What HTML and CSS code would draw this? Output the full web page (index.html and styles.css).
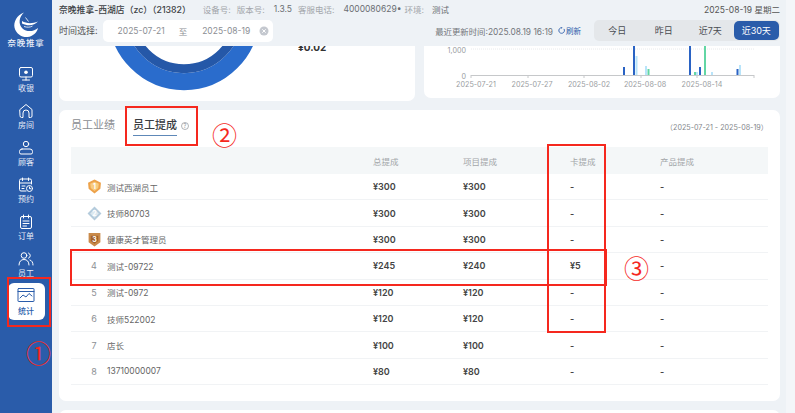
FILE: index.html
```html
<!DOCTYPE html>
<html lang="zh">
<head>
<meta charset="utf-8">
<title>员工提成</title>
<link rel="stylesheet" href="styles.css">
</head>
<body>
<div class="app">
  <aside class="side">
    <div class="brand">
      <svg class="logo" viewBox="0 0 26 26" width="26" height="26">
        <path d="M11 .5C3.500 3.500 .5 10 1.500 15.500 3 22 9 25.500 14.500 25 20 24.500 24 20.500 25 16 21 19.500 14 20.500 9.500 16.500 5 12 6 5 11 .5Z" fill="#fff"/>
        <path d="M9 9C13 11.500 19 12 25 9.500 21.500 13.500 15 14.500 9 11.500Z" fill="#fff"/>
        <path d="M12.500 5.500 15.500 9.500M11 14.500C14 15.500 17 15.500 19.500 14" stroke="#fff" stroke-width=".8" fill="none"/>
      </svg>
      <div class="brand-name">奈晚推拿</div>
    </div>
    <nav class="nav">
      <div class="nav-item">
        <svg viewBox="0 0 16 16" width="16" height="16"><rect x="1.500" y="1.500" width="13" height="9.500" rx="1.500"/><circle class="solid" cx="8" cy="6.200" r="1.800"/><path d="M8 11v3M4.500 14h7"/></svg>
        <span>收银</span>
      </div>
      <div class="nav-item">
        <svg viewBox="0 0 16 16" width="16" height="16"><path d="M2 6.500 8 1.500l6 5v6.500a1.500 1.500 0 0 1-1.500 1.500H11V10a3 3 0 0 0-6 0v4.500H3.500A1.500 1.500 0 0 1 2 13Z"/></svg>
        <span>房间</span>
      </div>
      <div class="nav-item">
        <svg viewBox="0 0 16 16" width="16" height="16"><circle cx="8" cy="4" r="2.700"/><path d="M4 9h8a2.500 2.500 0 0 1 2.500 2.500v1A1.500 1.500 0 0 1 13 14H3a1.500 1.500 0 0 1-1.500-1.500v-1A2.500 2.500 0 0 1 4 9Z"/></svg>
        <span>顾客</span>
      </div>
      <div class="nav-item">
        <svg viewBox="0 0 16 16" width="16" height="16"><path d="M8 14H3a1.500 1.500 0 0 1-1.500-1.500v-9A1.500 1.500 0 0 1 3 2h9a1.500 1.500 0 0 1 1.500 1.500V7M4.500 1v2.500M10.500 1v2.500M1.500 6h12M4 9h3M4 11.500h2"/><circle cx="11.500" cy="11.500" r="3"/><path d="M11.500 10v1.700h1.300"/></svg>
        <span>预约</span>
      </div>
      <div class="nav-item">
        <svg viewBox="0 0 16 16" width="16" height="16"><rect x="2.500" y="2.500" width="11" height="12" rx="1.500"/><path d="M5.500 1v3M10.500 1v3M5 7h6M5 9.500h6M5 12h3.500"/></svg>
        <span>订单</span>
      </div>
      <div class="nav-item">
        <svg viewBox="0 0 16 16" width="16" height="16"><circle cx="6" cy="4.500" r="2.800"/><path d="M1 14c0-3.500 2-5.500 5-5.500s5 2 5 5.500M10.500 2a2.800 2.800 0 0 1 0 5.200M12 9c2 .6 3 2.500 3 5"/></svg>
        <span>员工</span>
      </div>
      <div class="nav-item active">
        <svg viewBox="0 0 18 16" width="18" height="16"><rect x="1" y="1.500" width="16" height="13" rx=".5"/><path d="M1 4.500h16M3 11l3-3 3 2 3-3.500 3 2.500"/></svg>
        <span>统计</span>
      </div>
    </nav>
  </aside>

  <main class="main">
    <header class="top">
      <div class="top-row">
        <div class="info">
          <strong class="shop">奈晚推拿-西湖店（zc）（21382）</strong>
          <span class="muted gap-a">设备号:</span>
          <span class="muted gap-b">版本号:</span>
          <span class="val gap-c">1.3.5</span>
          <span class="muted gap-b">客服电话:</span>
          <span class="val gap-c">4000080629•</span>
          <span class="muted gap-d">环境:</span>
          <span class="val gap-e">测试</span>
        </div>
        <div class="today">2025-08-19 星期二</div>
      </div>
      <div class="filter-row">
        <div class="filter">
          <span class="filter-label">时间选择:</span>
          <div class="range">
            <span>2025-07-21</span><span class="to">至</span><span>2025-08-19</span>
            <svg class="clear" viewBox="0 0 10 10" width="10" height="10"><circle cx="5" cy="5" r="4.500" fill="#c4c8cf"/><path d="M3.300 3.300l3.400 3.400M6.700 3.300l-3.400 3.400" stroke="#fff" stroke-width="1"/></svg>
          </div>
        </div>
        <div class="filter-right">
          <span class="updated">最近更新时间:2025.08.19 16:19</span>
          <span class="refresh">
            <svg viewBox="0 0 8 8" width="7" height="7"><path d="M6.800 2.200A3.200 3.200 0 1 1 4 .8" fill="none" stroke="#2a5caa" stroke-width="1"/><path d="M3.600 0 5.300 .9 3.700 2Z" fill="#2a5caa"/></svg>刷新
          </span>
          <div class="seg">
            <span>今日</span><span>昨日</span><span>近7天</span><span class="on">近30天</span>
          </div>
        </div>
      </div>
    </header>

    <div class="scroll">
      <div class="cards-top">
        <section class="card donut-card">
          <svg class="donut" viewBox="0 0 160 55" width="160" height="55">
            <circle cx="80" cy="-31.300" r="67" fill="none" stroke="#2a6ccc" stroke-width="17"/>
            <circle cx="80" cy="-31.300" r="54" fill="none" stroke="#2558a8" stroke-width="9"/>
          </svg>
          <strong class="donut-val">¥0.02</strong>
        </section>
        <section class="card chart-card">
          <svg class="chart" viewBox="0 0 356 52" width="356" height="52">
            <line class="grid" x1="47" y1="3" x2="330" y2="3"/>
            <text class="tick" x="42" y="6.500" text-anchor="end">1,000</text>
            <text class="tick" x="42" y="32.500" text-anchor="end">0</text>
            <path class="axis" d="M47 29.500H330M47 29v3M104 29v3M160 29v3M217 29v3M273 29v3M330 29v3"/>
            <rect class="b1" x="199" y="21" width="2" height="8"/>
            <rect class="b1" x="209" y="0" width="2" height="29"/>
            <rect class="b2" x="211.500" y="10" width="2" height="19"/>
            <rect class="b2" x="221" y="20" width="2" height="9"/>
            <rect class="b3" x="223.500" y="23" width="2" height="6"/>
            <rect class="b1" x="265" y="0" width="2" height="29"/>
            <rect class="b3" x="270" y="26" width="2" height="3"/>
            <rect class="b2" x="272" y="26" width="2" height="3"/>
            <rect class="b1" x="275" y="21" width="2" height="8"/>
            <rect class="b3" x="280" y="0" width="2" height="29"/>
            <rect class="b2" x="287" y="26" width="2" height="3"/>
            <rect class="b1" x="312.500" y="23" width="2" height="6"/>
            <rect class="b2" x="315" y="19" width="2" height="10"/>
            <text class="tick" x="52" y="41" text-anchor="middle">2025-07-21</text>
            <text class="tick" x="108" y="41" text-anchor="middle">2025-07-27</text>
            <text class="tick" x="165" y="41" text-anchor="middle">2025-08-02</text>
            <text class="tick" x="221" y="41" text-anchor="middle">2025-08-08</text>
            <text class="tick" x="278" y="41" text-anchor="middle">2025-08-14</text>
          </svg>
        </section>
      </div>

      <section class="card staff">
        <div class="tabs">
          <span class="tab">员工业绩</span>
          <span class="tab current">员工提成</span>
          <svg class="help" viewBox="0 0 8 8" width="8" height="8"><circle cx="4" cy="4" r="3.500" fill="none" stroke="#8f949a" stroke-width=".7"/><text x="4" y="6" text-anchor="middle">?</text></svg>
          <span class="period">（2025-07-21 - 2025-08-19）</span>
        </div>
        <div class="tbl">
          <div class="row head"><span></span><span></span><span>总提成</span><span>项目提成</span><span>卡提成</span><span>产品提成</span></div>
          <div class="row">
            <span class="rank"><svg viewBox="0 0 14 14" width="15" height="15"><path d="M7 .5 13 3.500 12.500 9 7 13.500 1.500 9 1 3.500Z" fill="#eda24a"/><path d="M7 2.500 11 4.500 10.500 8.300 7 11.300 3.500 8.300 3 4.500Z" fill="#f8cc80"/><text x="7" y="9" text-anchor="middle">1</text></svg></span>
            <span class="name">测试西湖员工</span><b>¥300</b><b>¥300</b><b>-</b><b>-</b>
          </div>
          <div class="row">
            <span class="rank"><svg viewBox="0 0 14 14" width="15" height="15"><path d="M7 .5 13.500 7 7 13.500 .5 7Z" fill="#b4cbdc"/><path d="M7 3 11 7 7 11 3 7Z" fill="#dce8ef"/><text x="7" y="9" text-anchor="middle">2</text></svg></span>
            <span class="name">技师80703</span><b>¥300</b><b>¥300</b><b>-</b><b>-</b>
          </div>
          <div class="row">
            <span class="rank"><svg viewBox="0 0 14 14" width="15" height="15"><path d="M1.500 1h11v8.500L7 13.500 1.500 9.500Z" fill="#c98a4a"/><path d="M3.500 3.500h7v5L7 11 3.500 8.500Z" fill="#a4642c"/><text x="7" y="9" text-anchor="middle">3</text></svg></span>
            <span class="name">健康英才管理员</span><b>¥300</b><b>¥300</b><b>-</b><b>-</b>
          </div>
          <div class="row">
            <span class="rank num">4</span><span class="name">测试-09722</span><b>¥245</b><b>¥240</b><b>¥5</b><b>-</b>
          </div>
          <div class="row">
            <span class="rank num">5</span><span class="name">测试-0972</span><b>¥120</b><b>¥120</b><b>-</b><b>-</b>
          </div>
          <div class="row">
            <span class="rank num">6</span><span class="name">技师522002</span><b>¥120</b><b>¥120</b><b>-</b><b>-</b>
          </div>
          <div class="row">
            <span class="rank num">7</span><span class="name">店长</span><b>¥100</b><b>¥100</b><b>-</b><b>-</b>
          </div>
          <div class="row">
            <span class="rank num">8</span><span class="name">13710000007</span><b>¥80</b><b>¥80</b><b>-</b><b>-</b>
          </div>
        </div>
      </section>
      <section class="card next"></section>
    </div>
  </main>
</div>

<div class="mark m1"></div>
<div class="mark m2"></div>
<div class="mark m3"></div>
<div class="mark m4"></div>
<span class="circled c1">①</span>
<span class="circled c2">②</span>
<span class="circled c3">③</span>
</body>
</html>
```

FILE: styles.css
```css
* { box-sizing: border-box; }
html, body { margin: 0; height: 413px; overflow: hidden; }
body {
  position: relative;
  background: #f4f6f9;
  font-family: Inter, "Noto Sans CJK SC", sans-serif;
  font-size: 8.500px;
  color: #444;
}
.app { display: flex; width: 795px; height: 413px; }

/* sidebar */
.side { flex: none; width: 52px; background: #2a5caa; color: #fff; }
.brand { display: flex; flex-direction: column; align-items: center; padding-top: 12px; height: 57px; }
.logo { margin-left: -1px; }
.brand-name { font-size: 8.500px; line-height: 11px; letter-spacing: .8px; font-weight: 500; white-space: nowrap; color: #e9eef7; }
.nav { display: flex; flex-direction: column; align-items: center; }
.nav-item { width: 37px; height: 37px; display: flex; flex-direction: column; align-items: center; justify-content: flex-end; gap: 1px; font-size: 8px; line-height: 11px; color: #e6ecf6; }
.nav-item svg { fill: none; stroke: #fff; stroke-width: 1; stroke-linecap: round; stroke-linejoin: round; }
.nav-item svg .solid { fill: #fff; stroke: none; }
.nav-item.active { background: #fff; color: #2a5caa; border-radius: 6px; margin-top: 4px; justify-content: center; gap: 3px; font-weight: 500; }
.nav-item.active svg { stroke: #2a5caa; }

/* main */
.main { flex: none; width: 734px; display: flex; flex-direction: column; background: #eef2f6; height: 413px; }
.top { flex: none; height: 46px; padding: 0 6px 0 7px; }
.top-row { display: flex; justify-content: space-between; align-items: center; height: 18px; }
.info { display: flex; align-items: center; white-space: nowrap; }
.shop { font-weight: 500; color: #3c3f44; font-size: 8.800px; }
.muted { color: #a3a6ab; }
.val { color: #6b6e73; }
.gap-a { margin-left: 12px; }
.gap-b { margin-left: 6px; }
.gap-c { margin-left: 9px; }
.gap-d { margin-left: 3px; }
.gap-e { margin-left: 8px; }
.today { color: #555; white-space: nowrap; }
.filter-row { display: flex; justify-content: space-between; align-items: center; margin-top: 2px; height: 21px; }
.filter { display: flex; align-items: center; gap: 5px; }
.filter-label { color: #555; font-size: 9px; }
.range { display: flex; align-items: center; width: 170px; height: 22px; background: #fff; border-radius: 5px; padding: 0 4px 0 15px; color: #8b8e93; }
.to { margin: 0 15px 0 14px; }
.clear { margin-left: auto; }
.filter-right { display: flex; align-items: center; }
.updated { color: #73767b; font-size: 8.400px; }
.refresh { display: flex; align-items: center; gap: 1px; color: #2a5caa; font-size: 7.500px; margin: 0 13px 0 5px; }
.seg { display: grid; grid-template-columns: repeat(4, 1fr); width: 186px; height: 21px; background: #e4e7ea; border-radius: 5px; align-items: center; text-align: center; color: #4a4d52; font-size: 9px; }
.seg span { line-height: 19px; }
.seg .on { background: #2a5caa; color: #fff; border-radius: 5px; margin-right: 1px; }

.scroll { flex: 1; overflow: hidden; padding: 0 6px 0 7px; }
.card { background: #fff; border-radius: 7px; }
.cards-top { display: flex; align-items: flex-start; gap: 9px; }
.donut-card { position: relative; width: 356px; height: 55px; border-radius: 0 0 7px 7px; overflow: hidden; }
.donut { display: block; margin-left: 45px; }
.donut-val { position: absolute; left: 239px; top: -5px; font-size: 10px; line-height: 12px; font-weight: 700; color: #333; }
.chart-card { width: 356px; height: 52px; border-radius: 0 0 7px 7px; overflow: hidden; }
.chart { display: block; }
.grid { stroke: #e8eaec; stroke-width: 1; stroke-dasharray: 1 1; }
.axis { stroke: #c6c8ca; fill: none; stroke-width: 1; }
.tick { font-family: Inter, sans-serif; font-size: 7.200px; fill: #9a9da1; }
.b1 { fill: #2a63c4; }
.b2 { fill: #b8e4fa; }
.b3 { fill: #62d6a4; }

.staff { margin-top: 9px; height: 291px; padding: 0 12px; }
.tabs { position: relative; display: flex; align-items: flex-start; height: 37px; }
.tab { font-size: 11px; line-height: 16px; margin-top: 7px; color: #8a8d91; margin-right: 18px; padding-bottom: 2px; }
.tab.current { font-weight: 500; color: #3a3d42; margin-right: 4px; border-bottom: 1px solid #5e88b8; }
.help { margin-top: 12px; }
.help text { font-size: 5.500px; fill: #8f949a; font-family: Inter, sans-serif; }
.period { margin-left: auto; margin-top: 12px; font-size: 7.200px; color: #85888c; white-space: nowrap; }
.tbl { width: 697px; }
.row { display: grid; grid-template-columns: 36px 266px 90px 107px 90px 108px; align-items: center; height: 26.400px; border-bottom: 1px solid #f1f3f5; }
.row b { font-weight: 600; color: #444; font-size: 9px; }
.row.head { height: 27px; background: #f4f7f8; border-bottom: 0; color: #a3a6a9; font-size: 8.500px; }
.rank { display: flex; justify-content: center; margin-left: 8px; margin-right: -2px; }
.rank text { font-size: 6.500px; fill: #fff; font-family: Inter, sans-serif; font-weight: 700; }
.rank.num { color: #8d9094; font-size: 9px; }
.name { color: #666; }
.next { margin-top: 9px; height: 30px; }

/* red review marks drawn over the screenshot */
.mark { position: absolute; border: 2px solid #f5281e; }
.m1 { left: 7px; top: 277px; width: 44px; height: 50px; }
.m2 { left: 125px; top: 106px; width: 73px; height: 40px; }
.m3 { left: 547px; top: 144px; width: 59px; height: 189px; }
.m4 { left: 70px; top: 249px; width: 537px; height: 37px; }
.circled { position: absolute; font-family: "Noto Sans CJK SC", sans-serif; font-size: 25px; line-height: 30px; color: #f5281e; font-weight: 400; }
.c1 { left: 26px; top: 337px; }
.c2 { left: 212px; top: 119px; }
.c3 { left: 624px; top: 252px; }
```
